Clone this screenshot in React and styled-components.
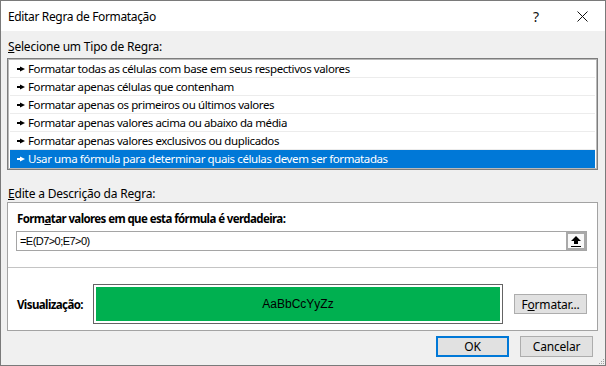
import React from "react";
import styled, { createGlobalStyle } from "styled-components";

const Global = createGlobalStyle`
  html, body { margin: 0; padding: 0; background: #ffffff; }
  * { box-sizing: border-box; }
`;

const FONT = `"Noto Sans", "Open Sans", sans-serif`;

const Window = styled.div`
  position: relative;
  width: 606px;
  height: 366px;
  border: 1px solid #7a7a7a;
  display: flex;
  flex-direction: column;
  font-family: ${FONT};
  font-size: 12px;
  color: #000;
  background: #f0f0f0;
  overflow: hidden;
`;

const TitleBar = styled.div`
  height: 30px;
  flex: none;
  background: #ffffff;
  display: flex;
  align-items: center;
  padding-left: 7px;
`;

const Title = styled.div`
  flex: 1;
  font-size: 12px;
  letter-spacing: -0.35px;
`;

const TitleButton = styled.div`
  width: ${(p) => p.$w}px;
  height: 30px;
  display: flex;
  align-items: center;
  justify-content: center;
  font-size: 14px;
  color: #111;
`;

const Body = styled.div`
  flex: 1;
  display: flex;
  flex-direction: column;
  padding: 0 7px 0 6px;
`;

const SectionLabel = styled.div`
  height: 16px;
  line-height: 16px;
  margin-top: ${(p) => p.$mt}px;
  margin-bottom: ${(p) => p.$mb}px;
  padding-left: 1px;
  letter-spacing: -0.2px;
`;

const ListBox = styled.div`
  height: 112px;
  background: #fff;
  border: 1px solid #7d7d7d;
  box-shadow: inset 0 0 0 1px #b9b9b9;
  padding: 1px 2px;
  display: flex;
  flex-direction: column;
`;

const Row = styled.div`
  height: 18px;
  flex: none;
  display: flex;
  align-items: center;
  padding-left: 7px;
  gap: 3px;
  border-bottom: 1px solid ${(p) => (p.$selected ? "#0078d7" : "#ececec")};
  background: ${(p) => (p.$selected ? "#0078d7" : "#fff")};
  color: ${(p) => (p.$selected ? "#fff" : "#000")};
  font-size: 11.5px;
  letter-spacing: -0.4px;
  white-space: nowrap;
`;

const DescBox = styled.div`
  height: 129px;
  background: #fff;
  border: 1px solid #a3a3a3;
  display: flex;
  flex-direction: column;
`;

const BoldLabel = styled.div`
  font-weight: bold;
  font-size: 11.5px;
  height: 16px;
  line-height: 16px;
  margin: 8px 0 4px 9px;
  letter-spacing: -0.6px;
`;

const FormulaInput = styled.div`
  height: 20px;
  margin: 0 10px 0 8px;
  border: 1px solid #a5a5a5;
  display: flex;
  align-items: center;
  padding-left: 3px;
`;

const FormulaText = styled.div`
  flex: 1;
  font-family: "Liberation Sans", sans-serif;
  font-size: 11px;
  letter-spacing: -0.55px;
`;

const CollapseButton = styled.div`
  width: 20px;
  height: 18px;
  border: 2px solid #a9a9a9;
  background: #f9f9f9;
  display: flex;
  align-items: center;
  justify-content: center;
`;

const Separator = styled.div`
  height: 1px;
  background: #c4c4c4;
  margin-top: 16px;
`;

const PreviewRow = styled.div`
  display: flex;
  align-items: center;
  margin-top: 16px;
  padding-left: 9px;
`;

const PreviewLabel = styled.div`
  width: 76px;
  font-weight: bold;
  font-size: 11.5px;
  letter-spacing: -0.6px;
`;

const PreviewFrame = styled.div`
  width: 410px;
  height: 40px;
  border: 1px solid #646464;
  padding: 2px;
  background: #fff;
`;

const PreviewFill = styled.div`
  height: 100%;
  background: #00b050;
  display: flex;
  align-items: center;
  justify-content: center;
  font-family: "Liberation Sans", sans-serif;
  font-size: 12px;
  color: #000;
`;

const Button = styled.div`
  width: 73px;
  height: ${(p) => p.$h}px;
  background: #e1e1e1;
  border: ${(p) => (p.$default ? "2px solid #0078d7" : "1px solid #adadad")};
  display: flex;
  align-items: center;
  justify-content: center;
  margin-left: ${(p) => p.$ml || 0}px;
  letter-spacing: -0.2px;
`;

const ButtonRow = styled.div`
  display: flex;
  justify-content: flex-end;
  gap: 11px;
  margin-top: 5px;
  padding-right: 5px;
`;

const Grip = styled.svg`
  position: absolute;
  right: 1px;
  bottom: 1px;
`;

const Arrow = () => (
  <svg width="8" height="6" viewBox="0 0 8 6">
    <rect x="0" y="2" width="4" height="2" fill="currentColor" />
    <polygon points="3,0.5 8,3 3,5.5" fill="currentColor" />
  </svg>
);

const UpArrow = () => (
  <svg width="10" height="11" viewBox="0 0 10 11">
    <polygon points="5,0 10,5 7,5 7,8 3,8 3,5 0,5" fill="#000" />
    <rect x="0" y="10" width="10" height="1" fill="#000" />
  </svg>
);

const CloseIcon = () => (
  <svg width="11" height="11" viewBox="0 0 11 11">
    <path d="M0.5 0.5 L10.5 10.5 M10.5 0.5 L0.5 10.5" stroke="#111" strokeWidth="1" />
  </svg>
);

const rules = [
  "Formatar todas as células com base em seus respectivos valores",
  "Formatar apenas células que contenham",
  "Formatar apenas os primeiros ou últimos valores",
  "Formatar apenas valores acima ou abaixo da média",
  "Formatar apenas valores exclusivos ou duplicados",
  "Usar uma fórmula para determinar quais células devem ser formatadas",
];

export default function App() {
  return (
    <>
      <Global />
      <Window>
        <TitleBar>
          <Title>Editar Regra de Formatação</Title>
          <TitleButton $w={46}>?</TitleButton>
          <TitleButton $w={46}>
            <CloseIcon />
          </TitleButton>
        </TitleBar>
        <Body>
          <SectionLabel $mt={8} $mb={3}>
            <u>S</u>elecione um Tipo de Regra:
          </SectionLabel>
          <ListBox>
            {rules.map((r, i) => (
              <Row key={r} $selected={i === rules.length - 1}>
                <Arrow />
                <span>{r}</span>
              </Row>
            ))}
          </ListBox>
          <SectionLabel $mt={16} $mb={0}>
            <u>E</u>dite a Descrição da Regra:
          </SectionLabel>
          <DescBox>
            <BoldLabel>
              Form<u>a</u>tar valores em que esta fórmula é verdadeira:
            </BoldLabel>
            <FormulaInput>
              <FormulaText>=E(D7&gt;0;E7&gt;0)</FormulaText>
              <CollapseButton>
                <UpArrow />
              </CollapseButton>
            </FormulaInput>
            <Separator />
            <PreviewRow>
              <PreviewLabel>Visualização:</PreviewLabel>
              <PreviewFrame>
                <PreviewFill>AaBbCcYyZz</PreviewFill>
              </PreviewFrame>
              <Button $h={20} $ml={11}>
                F<u>o</u>rmatar...
              </Button>
            </PreviewRow>
          </DescBox>
          <ButtonRow>
            <Button $h={21} $default>
              OK
            </Button>
            <Button $h={21}>Cancelar</Button>
          </ButtonRow>
        </Body>
        <Grip width="5" height="5" viewBox="0 0 5 5">
          <rect x="4" y="0" width="1" height="1" fill="#a0a0a0" />
          <rect x="2" y="2" width="1" height="1" fill="#a0a0a0" />
          <rect x="4" y="2" width="1" height="1" fill="#a0a0a0" />
          <rect x="0" y="4" width="1" height="1" fill="#a0a0a0" />
          <rect x="2" y="4" width="1" height="1" fill="#a0a0a0" />
          <rect x="4" y="4" width="1" height="1" fill="#a0a0a0" />
        </Grip>
      </Window>
    </>
  );
}
